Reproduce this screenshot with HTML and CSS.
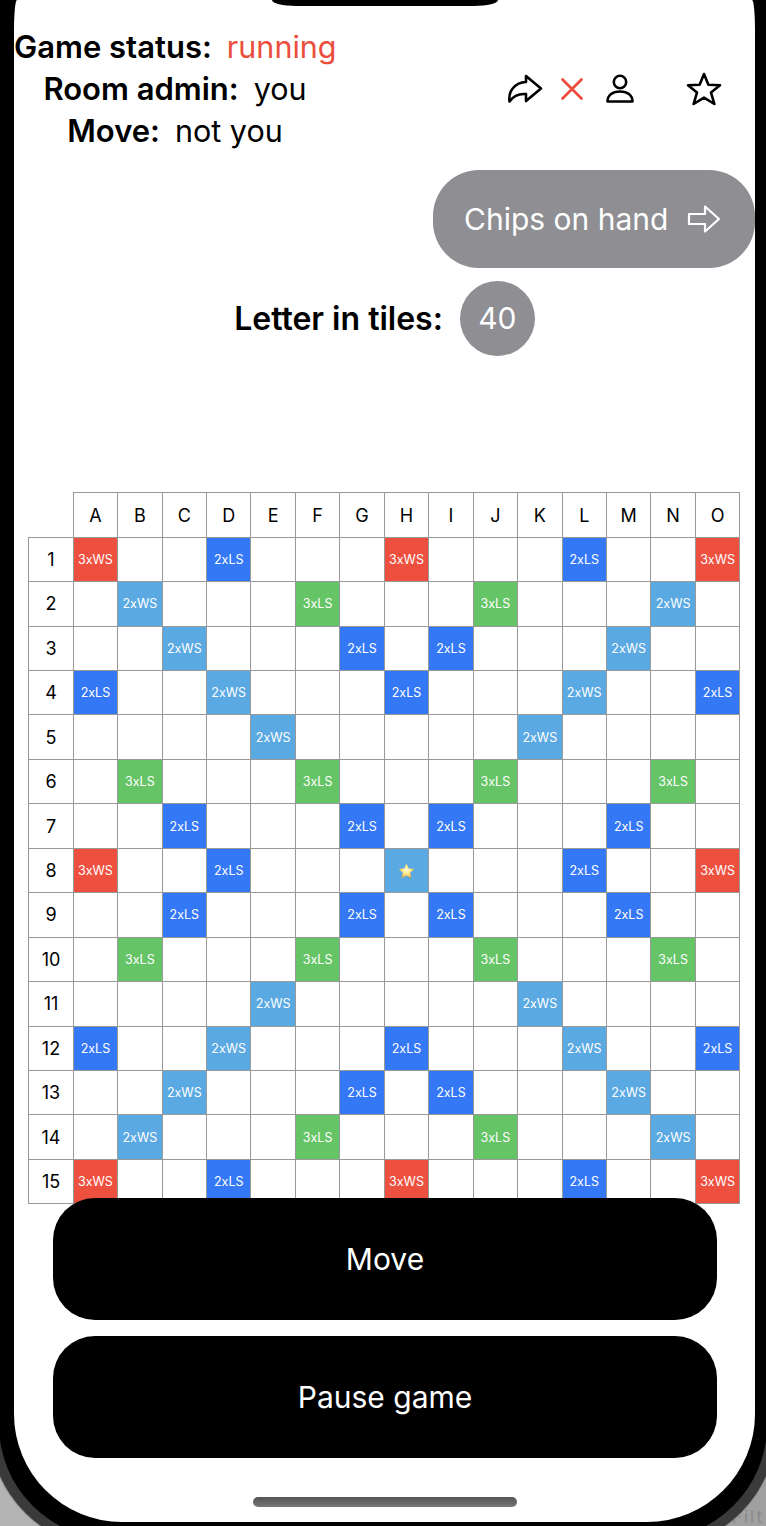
FILE: index.html
```html
<!DOCTYPE html>
<html lang="en">

<head>
    <meta charset="UTF-8">
    <meta name="viewport" content="width=device-width, initial-scale=1.0">
    <title>Game room</title>
    <link rel="stylesheet" href="styles.css">
</head>

<body>
    <div class="desk-text">Filt</div>
    <div class="frame">
        <div class="ring">
            <div class="bezel">
                <div class="screen">
                    <div class="notch"></div>

                    <header class="top">
                        <div class="status">
                            <p><b>Game status:</b><span class="running">running</span></p>
                            <p><b>Room admin:</b><span>you</span></p>
                            <p><b>Move:</b><span>not you</span></p>
                        </div>
                        <div class="icons">
                            <svg class="icon-share" width="36" height="30" viewBox="0 0 36 30">
                                <path d="M19 2 L34 14.5 L19 27 L19 20 C12 19.5 6.5 21.5 2.5 27.5 C1 17 8 8.5 19 8 Z" />
                            </svg>
                            <svg class="icon-x" width="24" height="24" viewBox="0 0 24 24">
                                <path d="M2.5 2.5 L21.5 21.5 M21.5 2.5 L2.5 21.5" />
                            </svg>
                            <svg class="icon-user" width="30" height="30" viewBox="0 0 30 30">
                                <circle cx="15" cy="8" r="6.2" />
                                <path d="M2.5 27.5 C2.5 21 8 17.5 15 17.5 C22 17.5 27.5 21 27.5 27.5 Z" />
                            </svg>
                            <svg class="icon-star" width="36" height="34" viewBox="0 0 36 34">
                                <path d="M18 2 L22.4 12.8 L34 13.3 L25 20.6 L28.4 32 L18 25.6 L7.6 32 L11 20.6 L2 13.3 L13.6 12.8 Z" />
                            </svg>
                        </div>
                    </header>

                    <div class="chips-row">
                        <button class="chips" type="button">
                            Chips on hand
                            <svg width="34" height="30" viewBox="0 0 34 30">
                                <path d="M2 10 L18 10 L18 2.5 L32 15 L18 27.5 L18 20 L2 20 Z" />
                            </svg>
                        </button>
                    </div>

                    <div class="tiles">
                        <b>Letter in tiles:</b>
                        <div class="count">40</div>
                    </div>

                    <table class="board">
                        <tr class="letters">
                            <th class="corner"></th>
                            <th>A</th><th>B</th><th>C</th><th>D</th><th>E</th><th>F</th><th>G</th><th>H</th><th>I</th><th>J</th><th>K</th><th>L</th><th>M</th><th>N</th><th>O</th>
                        </tr>
                        <tr><th>1</th><td class="red">3xWS</td><td></td><td></td><td class="blue">2xLS</td><td></td><td></td><td></td><td class="red">3xWS</td><td></td><td></td><td></td><td class="blue">2xLS</td><td></td><td></td><td class="red">3xWS</td></tr>
                        <tr><th>2</th><td></td><td class="sky">2xWS</td><td></td><td></td><td></td><td class="green">3xLS</td><td></td><td></td><td></td><td class="green">3xLS</td><td></td><td></td><td></td><td class="sky">2xWS</td><td></td></tr>
                        <tr><th>3</th><td></td><td></td><td class="sky">2xWS</td><td></td><td></td><td></td><td class="blue">2xLS</td><td></td><td class="blue">2xLS</td><td></td><td></td><td></td><td class="sky">2xWS</td><td></td><td></td></tr>
                        <tr><th>4</th><td class="blue">2xLS</td><td></td><td></td><td class="sky">2xWS</td><td></td><td></td><td></td><td class="blue">2xLS</td><td></td><td></td><td></td><td class="sky">2xWS</td><td></td><td></td><td class="blue">2xLS</td></tr>
                        <tr><th>5</th><td></td><td></td><td></td><td></td><td class="sky">2xWS</td><td></td><td></td><td></td><td></td><td></td><td class="sky">2xWS</td><td></td><td></td><td></td><td></td></tr>
                        <tr><th>6</th><td></td><td class="green">3xLS</td><td></td><td></td><td></td><td class="green">3xLS</td><td></td><td></td><td></td><td class="green">3xLS</td><td></td><td></td><td></td><td class="green">3xLS</td><td></td></tr>
                        <tr><th>7</th><td></td><td></td><td class="blue">2xLS</td><td></td><td></td><td></td><td class="blue">2xLS</td><td></td><td class="blue">2xLS</td><td></td><td></td><td></td><td class="blue">2xLS</td><td></td><td></td></tr>
                        <tr><th>8</th><td class="red">3xWS</td><td></td><td></td><td class="blue">2xLS</td><td></td><td></td><td></td>
                            <td class="sky">
                                <svg class="center-star" width="19" height="18" viewBox="0 0 18 18">
                                    <defs>
                                        <radialGradient id="starFill" cx="50%" cy="45%" r="60%">
                                            <stop offset="0%" stop-color="#fffbdc" />
                                            <stop offset="50%" stop-color="#fde27a" />
                                            <stop offset="100%" stop-color="#e79a1c" />
                                        </radialGradient>
                                    </defs>
                                    <path d="M9 1.5 L11.2 6.6 L16.8 7.1 L12.6 10.8 L13.9 16.3 L9 13.4 L4.1 16.3 L5.4 10.8 L1.2 7.1 L6.8 6.6 Z" fill="url(#starFill)" />
                                </svg>
                            </td>
                            <td></td><td></td><td></td><td class="blue">2xLS</td><td></td><td></td><td class="red">3xWS</td></tr>
                        <tr><th>9</th><td></td><td></td><td class="blue">2xLS</td><td></td><td></td><td></td><td class="blue">2xLS</td><td></td><td class="blue">2xLS</td><td></td><td></td><td></td><td class="blue">2xLS</td><td></td><td></td></tr>
                        <tr><th>10</th><td></td><td class="green">3xLS</td><td></td><td></td><td></td><td class="green">3xLS</td><td></td><td></td><td></td><td class="green">3xLS</td><td></td><td></td><td></td><td class="green">3xLS</td><td></td></tr>
                        <tr><th>11</th><td></td><td></td><td></td><td></td><td class="sky">2xWS</td><td></td><td></td><td></td><td></td><td></td><td class="sky">2xWS</td><td></td><td></td><td></td><td></td></tr>
                        <tr><th>12</th><td class="blue">2xLS</td><td></td><td></td><td class="sky">2xWS</td><td></td><td></td><td></td><td class="blue">2xLS</td><td></td><td></td><td></td><td class="sky">2xWS</td><td></td><td></td><td class="blue">2xLS</td></tr>
                        <tr><th>13</th><td></td><td></td><td class="sky">2xWS</td><td></td><td></td><td></td><td class="blue">2xLS</td><td></td><td class="blue">2xLS</td><td></td><td></td><td></td><td class="sky">2xWS</td><td></td><td></td></tr>
                        <tr><th>14</th><td></td><td class="sky">2xWS</td><td></td><td></td><td></td><td class="green">3xLS</td><td></td><td></td><td></td><td class="green">3xLS</td><td></td><td></td><td></td><td class="sky">2xWS</td><td></td></tr>
                        <tr><th>15</th><td class="red">3xWS</td><td></td><td></td><td class="blue">2xLS</td><td></td><td></td><td></td><td class="red">3xWS</td><td></td><td></td><td></td><td class="blue">2xLS</td><td></td><td></td><td class="red">3xWS</td></tr>
                    </table>

                    <div class="actions">
                        <button type="button">Move</button>
                        <button type="button">Pause game</button>
                    </div>

                    <div class="home-bar"></div>
                </div>
            </div>
        </div>
    </div>
</body>

</html>
```

FILE: styles.css
```css
html,
body {
    margin: 0;
    height: 1526px;
    overflow: hidden;
}

body {
    position: relative;
    font-family: Inter, 'Noto Sans', sans-serif;
    background: linear-gradient(to right, #b4b4b4, #a0a0a0);
}

.desk-text {
    position: absolute;
    right: 2px;
    bottom: 0;
    font-size: 17px;
    line-height: 1;
    letter-spacing: 2px;
    color: #8a8a8a;
}

.frame {
    position: relative;
    box-sizing: border-box;
    width: 790px;
    height: 1550px;
    margin-left: -12px;
    padding: 0 1px 1px;
    background: #8f8f8f;
    border-radius: 0 0 125px 125px;
}

.ring {
    box-sizing: border-box;
    height: 100%;
    padding: 0 10px 10px;
    background: #3a3a3a;
    border-radius: 0 0 124px 124px;
}

.bezel {
    box-sizing: border-box;
    height: 100%;
    padding: 0 12px 17px 15px;
    background: #000;
    border-radius: 0 0 114px 114px;
}

.screen {
    height: 100%;
    background: #fff;
    border-radius: 3px 3px 108px 108px / 30px 30px 108px 108px;
    overflow: hidden;
}

.notch {
    width: 226px;
    height: 6px;
    margin: 0 auto;
    background: #000;
    border-radius: 0 0 24px 24px / 0 0 6px 6px;
}

.top {
    display: flex;
    align-items: center;
    margin-top: 20px;
}

.status {
    width: 322px;
    font-size: 30.5px;
    text-align: center;
    white-space: nowrap;
    flex-shrink: 0;
}

.status p {
    margin: 0;
    height: 42px;
    line-height: 42px;
}

.status b {
    font-size: 31px;
    font-weight: 600;
    margin-right: 15px;
}

.running {
    color: #eb4e3d;
}

.icons {
    display: flex;
    align-items: center;
    margin-left: 171px;
}

.icons svg {
    fill: none;
    stroke: #000;
    stroke-width: 2.6;
    stroke-linejoin: round;
    stroke-linecap: round;
}

.icon-x {
    margin-left: 17px;
}

.icons .icon-x {
    stroke: #eb4e3d;
    stroke-width: 2.8;
}

.icon-user {
    margin-left: 21px;
}

.icon-star {
    margin-left: 51px;
}

.chips-row {
    display: flex;
    justify-content: flex-end;
    margin-top: 18px;
}

.chips {
    display: flex;
    align-items: center;
    gap: 19px;
    width: 322px;
    height: 98px;
    padding: 0 0 0 31px;
    border: none;
    border-radius: 46px;
    background: #8e8e93;
    color: #fff;
    font-family: inherit;
    font-size: 30px;
}

.chips svg {
    fill: none;
    stroke: #fff;
    stroke-width: 2.2;
    stroke-linejoin: round;
}

.tiles {
    display: flex;
    align-items: center;
    justify-content: center;
    gap: 17px;
    margin-top: 13px;
    font-size: 32px;
}

.tiles b {
    font-weight: 600;
}

.count {
    width: 75px;
    height: 75px;
    line-height: 75px;
    font-size: 30px;
    text-align: center;
    border-radius: 50%;
    background: #8e8e93;
    color: #fff;
}

.board {
    width: 712px;
    margin: 136.3px 0 0 14.3px;
    table-layout: fixed;
    border-collapse: collapse;
}

.board th,
.board td {
    height: 44.44px;
    padding: 0;
    box-sizing: border-box;
    border: 1px solid #999;
    text-align: center;
    vertical-align: middle;
}

.board th {
    font-size: 18px;
    font-weight: 400;
}

.board td {
    font-size: 12.5px;
    color: #fff;
}

.board .corner {
    border-top: none;
    border-left: none;
}

.red {
    background: #ee5040;
}

.blue {
    background: #3478f6;
}

.sky {
    background: #5aa9e2;
}

.green {
    background: #65c466;
}

.center-star {
    display: block;
    margin: 0 auto;
}

.actions {
    position: relative;
    display: flex;
    flex-direction: column;
    gap: 16px;
    margin: -6.3px 38px 0 39px;
}

.actions button {
    height: 122px;
    border: none;
    border-radius: 42px;
    background: #000;
    color: #fff;
    font-family: inherit;
    font-size: 30px;
}

.home-bar {
    width: 264px;
    height: 10px;
    margin: 39px auto 0;
    border-radius: 5px;
    background: linear-gradient(to bottom, #555, #777);
}
```
